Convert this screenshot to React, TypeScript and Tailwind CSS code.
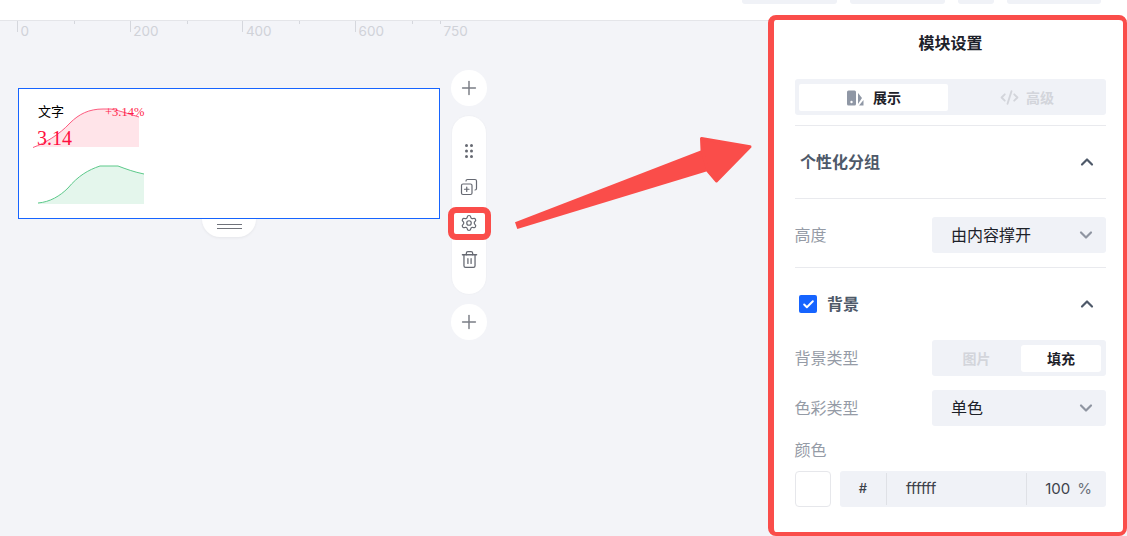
import { Check, ChevronDown, ChevronUp, CodeXml, CopyPlus, Plus, Settings, Trash2 } from "lucide-react";

const rulerMarks = ["0", "200", "400"];

function AddButton() {
  return (
    <button className="flex h-9 w-9 items-center justify-center rounded-full bg-white text-[#7a7d85]">
      <Plus size={22} strokeWidth={1.6} />
    </button>
  );
}

function Divider() {
  return <div className="h-px bg-[#e9eaee]" />;
}

function SelectBox({ value }: { value: string }) {
  return (
    <div className="flex h-9 w-[174px] items-center justify-between rounded-[3px] bg-[#f0f2f7] pl-[19px] pr-[10px] text-base text-[#1d2129]">
      <span>{value}</span>
      <ChevronDown size={20} strokeWidth={2.6} className="text-[#8f95a1]" />
    </div>
  );
}

function FieldRow({ label, children }: { label: string; children: React.ReactNode }) {
  return (
    <div className="flex items-center justify-between">
      <span className="-ml-[0.5px] -mt-px text-base text-[#959ba6]">{label}</span>
      {children}
    </div>
  );
}

export default function App() {
  return (
    <div className="relative h-[536px] w-[1127px] overflow-hidden bg-[#f3f4f8] font-['Inter','Noto_Sans_CJK_SC',sans-serif]">
      <header className="flex h-[21px] justify-end gap-[13px] border-b border-[#e4e5e9] bg-white pr-[26px]">
        <div className="h-1 w-[95px] rounded-b-[3px] bg-[#f0f2f7]" />
        <div className="h-1 w-[95px] rounded-b-[3px] bg-[#f0f2f7]" />
        <div className="h-1 w-9 rounded-b-[3px] bg-[#f0f2f7]" />
        <div className="h-1 w-[94px] rounded-b-[3px] bg-[#f0f2f7]" />
      </header>

      <div className="flex">
        <main className="w-[768px]">
          {/* ruler */}
          <div className="ml-[17px] flex h-[19px] items-start text-[13.5px] leading-[14px] text-[#d0d2d8]">
            {rulerMarks.map((mark) => (
              <div key={mark} className="flex w-[112.7px] items-start">
                <div className="h-[11px] w-[57px] border-l border-[#d5d7dd] pl-[2.5px] pt-[3px]">{mark}</div>
                <div className="h-[3px] border-l border-[#d5d7dd]" />
              </div>
            ))}
            <div className="flex w-[85px] items-start">
              <div className="h-[11px] w-[57px] border-l border-[#d5d7dd] pl-[2.5px] pt-[3px]">600</div>
              <div className="h-[3px] border-l border-[#d5d7dd]" />
            </div>
            <div className="h-[3px] border-l border-[#d5d7dd] pl-[2.5px] pt-[3px]">750</div>
          </div>

          <div className="mt-[30px] flex items-start pl-[18px]">
            {/* module */}
            <div className="relative mt-[18px] h-[131px] w-[422px] border border-[#1664ff] bg-white pl-[14px] pt-4">
              <div className="relative h-[43px] w-[110px]">
                <svg width="110" height="43" viewBox="0 0 110 43" className="block">
                  <path d="M0 42.5C12 38 26 30 37 18C46 9 56 4 70 4H78C88 6 96 9 106 12V42H0Z" fill="#ffe4e9" />
                  <path d="M0 42.5C12 38 26 30 37 18C46 9 56 4 70 4H78C88 6 96 9 106 12" fill="none" stroke="#fd5a7e" strokeWidth="1" />
                </svg>
                <span className="absolute left-[5px] top-[-3px] text-[13px] leading-[18px] text-black">文字</span>
                <span className="absolute left-[72px] top-0 font-['Liberation_Serif',serif] text-[12.5px] leading-[14px] text-[#ff1f4b]">+3.14%</span>
                <span className="absolute left-[4px] top-[21px] font-['Liberation_Serif',serif] text-xl leading-[24px] text-[#ff0f40]">3.14</span>
              </div>
              <svg width="106" height="41" viewBox="0 0 106 41" className="ml-[5px] mt-4 block">
                <path d="M0 39C12 38 22 32 30 24C40 12 50 6 62 2C68 2 74 2 80 2C88 5 96 8 106 10V40H0Z" fill="#e4f6ec" />
                <path d="M0 39C12 38 22 32 30 24C40 12 50 6 62 2C68 2 74 2 80 2C88 5 96 8 106 10" fill="none" stroke="#5cc98a" strokeWidth="1" />
              </svg>
              <div className="absolute left-[183px] top-[calc(100%+1px)] flex h-[18px] w-[54px] flex-col items-center gap-[3px] rounded-b-[18px] bg-white pt-[5px] shadow-[0_1px_3px_rgba(0,0,0,0.06)]">
                <div className="h-px w-[25px] bg-[#6f727a]" />
                <div className="h-px w-[25px] bg-[#6f727a]" />
              </div>
            </div>

            {/* toolbar */}
            <div className="ml-[11px] flex w-9 flex-col items-center gap-[9px]">
              <AddButton />
              <div className="flex h-[180px] w-9 flex-col items-center rounded-full border border-[#f0f1f5] bg-white py-[17px] text-[#666972]">
                <div className="flex h-9 items-center justify-center">
                  <svg width="8" height="14" viewBox="0 0 8 14" fill="currentColor">
                    <circle cx="1.5" cy="1.5" r="1.5" />
                    <circle cx="6.5" cy="1.5" r="1.5" />
                    <circle cx="1.5" cy="7" r="1.5" />
                    <circle cx="6.5" cy="7" r="1.5" />
                    <circle cx="1.5" cy="12.5" r="1.5" />
                    <circle cx="6.5" cy="12.5" r="1.5" />
                  </svg>
                </div>
                <div className="flex h-9 items-center justify-center">
                  <CopyPlus size={18} strokeWidth={1.6} className="-scale-x-100" />
                </div>
                <div className="flex h-9 items-center justify-center">
                  <div className="flex h-[33px] w-[43px] shrink-0 items-center justify-center rounded-lg border-[6px] border-[#fa4d4a] bg-white">
                    <Settings size={18} strokeWidth={1.6} />
                  </div>
                </div>
                <div className="flex h-9 items-center justify-center">
                  <Trash2 size={19} strokeWidth={1.6} />
                </div>
              </div>
              <AddButton />
            </div>
          </div>
        </main>

        {/* settings panel */}
        <aside className="relative -mt-[6px] h-[521px] w-[359px] shrink-0 rounded-lg border-b-4 border-l-[6px] border-r-4 border-t-[5px] border-[#fa4d4a] bg-white pl-[21px] pr-[17px] pt-[13px]">
          <h2 className="h-5 text-center text-base font-bold leading-5 text-[#1d2129]">模块设置</h2>

          <div className="mt-[26px] flex h-9 rounded-[3px] bg-[#f0f2f7] pb-1 pl-1 pr-0 pt-[5px] text-sm font-bold">
            <div className="flex w-[149px] items-center justify-center gap-[9px] rounded-[2px] bg-white pl-px text-[#1d2129]">
              <svg width="17" height="16" viewBox="0 0 17 16">
                <rect x="0" y="0.5" width="9" height="15" rx="1.5" fill="#8f97a5" />
                <circle cx="4.5" cy="12" r="1.2" fill="#fff" />
                <path d="M11 3 15 8 11 14Z" fill="#8f97a5" />
                <path d="M12 15.5H16.5V10Z" fill="#8f97a5" />
              </svg>
              <span>展示</span>
            </div>
            <div className="flex flex-1 items-center justify-center gap-[7px] text-[#d3d5db]">
              <CodeXml size={19} strokeWidth={2.4} />
              <span>高级</span>
            </div>
          </div>

          <div className="mt-[10px]">
            <Divider />
          </div>

          <div className="flex h-[72px] items-center justify-between pl-[5px] pr-[9px]">
            <span className="text-base font-bold text-[#4e5969]">个性化分组</span>
            <ChevronUp size={20} strokeWidth={2.6} className="text-[#4e5969]" />
          </div>
          <Divider />

          <div className="mt-[18px]">
            <FieldRow label="高度">
              <SelectBox value="由内容撑开" />
            </FieldRow>
          </div>

          <div className="mt-[14px]">
            <Divider />
          </div>

          <div className="flex h-[72px] items-center justify-between pl-1 pr-[9px]">
            <div className="flex items-center gap-[10px]">
              <div className="flex h-[18px] w-[18px] items-center justify-center rounded-[2px] bg-[#1664ff] text-white">
                <Check size={13} strokeWidth={3.6} />
              </div>
              <span className="text-base font-bold text-[#4e5969]">背景</span>
            </div>
            <ChevronUp size={20} strokeWidth={2.6} className="text-[#4e5969]" />
          </div>

          <FieldRow label="背景类型">
            <div className="flex h-9 w-[174px] rounded-[3px] bg-[#f0f2f7] pb-1 pr-[5px] pt-[5px] text-sm font-bold">
              <div className="flex flex-1 items-center justify-center text-[#d3d5db]">图片</div>
              <div className="flex w-20 items-center justify-center rounded-[3px] bg-white text-[#1d2129]">填充</div>
            </div>
          </FieldRow>

          <div className="mt-[14px]">
            <FieldRow label="色彩类型">
              <SelectBox value="单色" />
            </FieldRow>
          </div>

          <div className="-ml-[0.5px] mt-3 h-[33px] text-base leading-[24px] text-[#959ba6]">颜色</div>

          <div className="flex gap-[9px]">
            <div className="h-9 w-9 rounded-[4px] border border-[#e6e7eb] bg-white" />
            <div className="flex h-9 flex-1 items-center rounded-[3px] bg-[#f0f2f7] py-[2px] text-[13px] text-[#3d424b]">
              <div className="flex h-full w-[47px] items-center justify-center border-r border-[#dfe1e6] font-medium">#</div>
              <div className="flex h-full w-[140px] items-center border-r border-[#dfe1e6] pl-[19px] text-[15px]">ffffff</div>
              <div className="flex flex-1 items-center justify-end gap-[7px] pr-[14px] text-[15px]">
                <span>100</span>
                <span className="text-[#6b7079]">%</span>
              </div>
            </div>
          </div>
        </aside>
      </div>

      {/* annotation arrow */}
      <svg width="250" height="105" viewBox="0 0 250 105" className="absolute left-[510px] top-[130px]">
        <path d="M5 92.3 192 20 198 41 7.3 99Z" fill="#fa4d4a" />
        <path d="M191.5 8.5 240 16.7 206.5 51 198 41 192 20Z" fill="#fa4d4a" stroke="#fa4d4a" strokeWidth="3" strokeLinejoin="round" />
      </svg>
    </div>
  );
}
